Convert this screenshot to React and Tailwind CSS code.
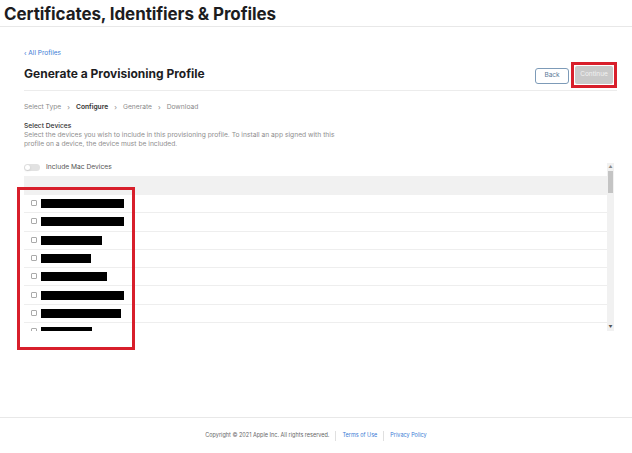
import React from 'react';

const devices = [83, 83, 61, 50, 66, 83, 80, 51];

const font = { fontFamily: 'Inter, "Liberation Sans", sans-serif' };

export default function App() {
  return (
    <div className="w-[632px] h-[453px] bg-white flex flex-col overflow-hidden relative" style={font}>
      {/* Top header */}
      <header className="h-[27px] pl-[4px] pt-[4px] border-b border-[#e8e8e8] shrink-0">
        <h1 className="text-[17px] leading-[20px] font-bold text-[#1d1d1f] tracking-[-0.1px]">
          Certificates, Identifiers &amp; Profiles
        </h1>
      </header>

      {/* Main */}
      <main className="flex-1 pl-[24px] pr-[15px] pt-[22px]">
        <a className="block text-[6.5px] leading-[9px] text-[#3a7bd5]">‹ All Profiles</a>

        <div className="mt-[4px] h-[29px] border-b border-[#ececec] flex items-start justify-between">
          <h2 className="mt-[4px] text-[12px] leading-[15px] font-bold text-[#1d1d1f]">Generate a Provisioning Profile</h2>
          <div className="flex items-start gap-[2px]">
            <button className="mt-[6px] h-[16px] w-[34px] rounded-[3px] border border-[#7d9bb8] text-[6.5px] text-[#5a7a99] bg-white">
              Back
            </button>
            <div className="border-[3px] border-[#d81f2b] p-[1px]">
              <button className="h-[18px] w-[38px] rounded-[2px] bg-[#c9c9c9] text-[6.5px] text-[#f2f2f2] block">
                Continue
              </button>
            </div>
          </div>
        </div>

        {/* Steps */}
        <div className="mt-[12px] flex items-center gap-[4px] text-[6.7px] leading-[9px] text-[#8a8a8a]">
          <span>Select Type</span>
          <span className="text-[7px] mx-[2px]">›</span>
          <span className="font-semibold text-[#333]">Configure</span>
          <span className="text-[7px] mx-[2px]">›</span>
          <span>Generate</span>
          <span className="text-[7px] mx-[2px]">›</span>
          <span>Download</span>
        </div>

        {/* Select devices */}
        <div className="mt-[10px] text-[6.7px] leading-[9px]">
          <div className="font-medium text-[#333]">Select Devices</div>
          <p className="text-[#8e8e8e] w-[330px]">
            Select the devices you wish to include in this provisioning profile. To install an app signed with this
            profile on a device, the device must be included.
          </p>
        </div>

        {/* Scroll area */}
        <div className="mt-[14px] h-[168px] flex pr-[3px]">
          <div className="flex-1 overflow-hidden">
            <div className="h-[8px] flex items-center gap-[6px]">
              <div className="w-[16px] h-[7px] rounded-full bg-[#e2e2e2] flex items-center px-[1px]">
                <div className="w-[5px] h-[5px] rounded-full bg-white shadow-sm" />
              </div>
              <span className="text-[6.7px] text-[#555]">Include Mac Devices</span>
            </div>
            <div className="h-[19px] mt-[5px] bg-[#f1f1f1]" />
            {devices.map((w, i) => (
              <div key={i} className="h-[18.3px] border-b border-[#eeeeee] flex items-center gap-[4px] pl-[7px]">
                <span className="w-[6px] h-[6px] rounded-[1px] border border-[#aaaaaa] bg-white -mt-[1px]" />
                <span className="h-[9px] bg-black" style={{ width: w }} />
              </div>
            ))}
          </div>
          {/* scrollbar */}
          <div className="w-[7px] bg-[#f1f1f1] flex flex-col items-center">
            <div className="h-[8px] flex items-center justify-center text-[4px] text-[#888] leading-none">▲</div>
            <div className="w-[5px] h-[22px] bg-[#c4c4c4]" />
            <div className="flex-1" />
            <div className="h-[8px] flex items-center justify-center text-[4px] text-[#555] leading-none">▼</div>
          </div>
        </div>
      </main>

      {/* Annotation box over devices */}
      <div className="absolute left-[17px] top-[187px] w-[118px] h-[163px] border-[3px] border-[#d81f2b] pointer-events-none" />

      {/* Footer */}
      <footer className="h-[36px] border-t border-[#e8e8e8] flex items-center justify-center text-[5.5px] shrink-0">
        <span className="text-[#666]">Copyright © 2021 Apple Inc. All rights reserved.</span>
        <span className="mx-[6px] h-[10px] border-l border-[#e0e0e0]" />
        <span className="text-[#3a7bd5]">Terms of Use</span>
        <span className="mx-[6px] h-[10px] border-l border-[#e0e0e0]" />
        <span className="text-[#3a7bd5]">Privacy Policy</span>
      </footer>
    </div>
  );
}
